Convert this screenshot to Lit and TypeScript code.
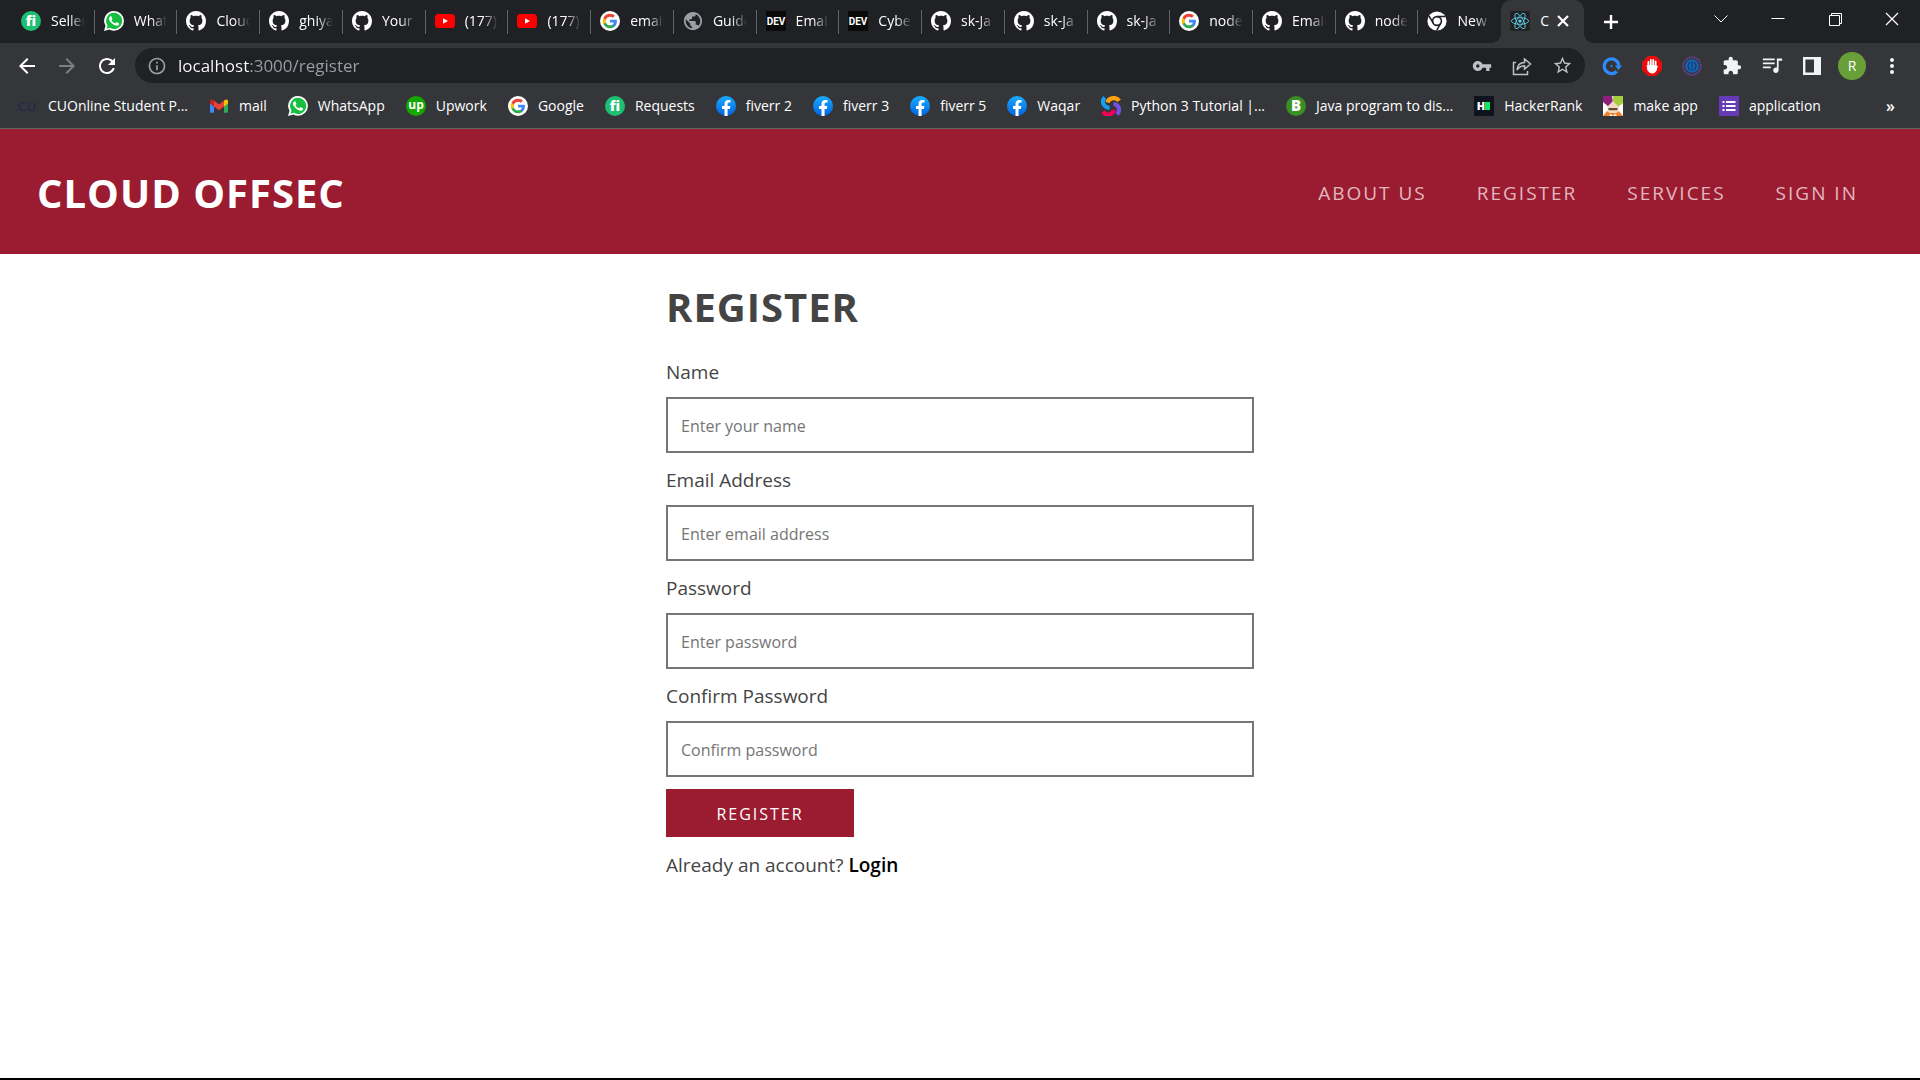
import { LitElement, html, css, svg, nothing } from "lit";
import type { TemplateResult } from "lit";
import { customElement, property } from "lit/decorators.js";

const P = {
  github:
    "M8 0C3.58 0 0 3.58 0 8c0 3.54 2.29 6.53 5.47 7.59.4.07.55-.17.55-.38 0-.19-.01-.82-.01-1.49-2.01.37-2.53-.49-2.69-.94-.09-.23-.48-.94-.82-1.13-.28-.15-.68-.52-.01-.53.63-.01 1.08.58 1.23.82.72 1.21 1.87.87 2.33.66.07-.52.28-.87.51-1.07-1.78-.2-3.64-.89-3.64-3.95 0-.87.31-1.59.82-2.15-.08-.2-.36-1.02.08-2.12 0 0 .67-.21 2.2.82.64-.18 1.32-.27 2-.27s1.36.09 2 .27c1.53-1.04 2.2-.82 2.2-.82.44 1.1.16 1.92.08 2.12.51.56.82 1.27.82 2.15 0 3.07-1.87 3.75-3.65 3.95.29.25.54.73.54 1.48 0 1.07-.01 1.93-.01 2.2 0 .21.15.46.55.38A8.01 8.01 0 0 0 16 8c0-4.42-3.58-8-8-8z",
  phone:
    "M17.472 14.382c-.297-.149-1.758-.867-2.03-.967-.273-.099-.471-.148-.67.15-.197.297-.767.966-.94 1.164-.173.199-.347.223-.644.075-.297-.15-1.255-.463-2.39-1.475-.883-.788-1.48-1.761-1.653-2.059-.173-.297-.018-.458.13-.606.134-.133.298-.347.446-.52.149-.174.198-.298.298-.497.099-.198.05-.371-.025-.52-.075-.149-.669-1.612-.916-2.207-.242-.579-.487-.5-.669-.51-.173-.008-.371-.01-.57-.01-.198 0-.52.074-.792.372-.272.297-1.04 1.016-1.04 2.479 0 1.462 1.065 2.875 1.213 3.074.149.198 2.096 3.2 5.077 4.487.709.306 1.262.489 1.694.625.712.227 1.36.195 1.871.118.571-.085 1.758-.719 2.006-1.413.248-.694.248-1.289.173-1.413-.074-.124-.272-.198-.57-.347",
  back: "M20 11H7.83l5.59-5.59L12 4l-8 8 8 8 1.41-1.41L7.83 13H20v-2z",
  forward: "M12 4l-1.41 1.41L16.17 11H4v2h12.17l-5.58 5.59L12 20l8-8z",
  reload:
    "M17.65 6.35C16.2 4.9 14.21 4 12 4c-4.42 0-7.99 3.58-7.99 8s3.57 8 7.99 8c3.73 0 6.84-2.55 7.73-6h-2.08c-.82 2.33-3.04 4-5.65 4-3.31 0-6-2.69-6-6s2.69-6 6-6c1.66 0 3.14.69 4.22 1.78L13 11h7V4l-2.35 2.35z",
  info: "M11 7h2v2h-2zm0 4h2v6h-2zm1-9C6.48 2 2 6.48 2 12s4.48 10 10 10 10-4.48 10-10S17.52 2 12 2zm0 18c-4.41 0-8-3.59-8-8s3.59-8 8-8 8 3.59 8 8-3.59 8-8 8z",
  star: "M22 9.24l-7.19-.62L12 2 9.19 8.63 2 9.24l5.46 4.73L5.82 21 12 17.27 18.18 21l-1.63-7.03L22 9.24zM12 15.4l-3.76 2.27 1-4.28-3.32-2.88 4.38-.38L12 6.1l1.71 4.04 4.38.38-3.32 2.88 1 4.28L12 15.4z",
  key: "M12.65 10C11.83 7.67 9.61 6 7 6c-3.31 0-6 2.69-6 6s2.69 6 6 6c2.61 0 4.83-1.67 5.65-4H17v4h4v-4h2v-4H12.65zM7 14c-1.1 0-2-.9-2-2s.9-2 2-2 2 .9 2 2-.9 2-2 2z",
  puzzle:
    "M20.5 11H19V7c0-1.1-.9-2-2-2h-4V3.5C13 2.12 11.88 1 10.5 1S8 2.12 8 3.5V5H4c-1.1 0-1.99.9-1.99 2v3.8H3.5c1.49 0 2.7 1.21 2.7 2.7s-1.21 2.7-2.7 2.7H2V20c0 1.1.9 2 2 2h3.8v-1.5c0-1.49 1.21-2.7 2.7-2.7 1.49 0 2.7 1.21 2.7 2.7V22H17c1.1 0 2-.9 2-2v-4h1.5c1.38 0 2.5-1.12 2.5-2.5S21.88 11 20.5 11z",
  queue:
    "M14.500 4H1v2h13.500V4zm0 4.500H1v2h13.500v-2zM1 15h9v-2H1v2zM17 4v10.500c-.31-.11-.65-.18-1-.18-1.900 0-3.200 1.340-3.200 3.100s1.340 3.100 3.100 3.100 3.100-1.340 3.100-3.100V6.500h4V4h-6z",
  globe:
    "M12 2C6.48 2 2 6.48 2 12s4.48 10 10 10 10-4.48 10-10S17.52 2 12 2zm-1 17.93c-3.95-.49-7-3.85-7-7.93 0-.62.08-1.21.21-1.79L9 15v1c0 1.1.9 2 2 2v1.93zm6.9-2.54c-.26-.81-1-1.39-1.9-1.39h-1v-3c0-.55-.45-1-1-1H8v-2h2c.55 0 1-.45 1-1V7h2c1.1 0 2-.9 2-2v-.41c2.93 1.19 5 4.06 5 7.41 0 2.08-.8 3.97-2.1 5.39z",
};

const icon = (size: number, box: string, body: unknown): TemplateResult =>
  html`<svg width=${size} height=${size} viewBox=${box} aria-hidden="true">${body}</svg>`;

const glyph = (d: string, fill: string, size = 24) => icon(size, "0 0 24 24", svg`<path d=${d} fill=${fill} />`);

const ICONS: Record<string, () => TemplateResult> = {
  fiverr: () =>
    icon(20, "0 0 20 20", svg`<circle cx="10" cy="10" r="10" fill="#1dbf73" />
      <text x="10" y="15" text-anchor="middle" font-family="Open Sans, sans-serif" font-weight="800" font-size="14" fill="#fff">fi</text>`),
  whatsapp: () =>
    icon(20, "0 0 24 24", svg`<path d="M12.2 0A11.8 11.8 0 0 1 12.2 23.6a11.8 11.8 0 0 1-5.7-1.5L0 24l1.8-6.3A11.8 11.8 0 0 1 12.2 0z" fill="#fff" />
      <path d="M12.1 2.2a9.7 9.7 0 1 1-5 18l-4 1.1 1.1-3.9a9.7 9.7 0 0 1 7.9-15.2z" fill="#16bf3f" />
      <path d=${P.phone} fill="#fff" />`),
  github: () => icon(20, "0 0 16 16", svg`<path d=${P.github} fill="#fff" />`),
  youtube: () =>
    icon(20, "0 0 20 20", svg`<rect y="3" width="20" height="14" rx="3.6" fill="#f00" /><path d="M8 7.2v5.6l5-2.8z" fill="#fff" />`),
  google: () =>
    icon(20, "0 0 32 32", svg`<circle cx="16" cy="16" r="16" fill="#fff" />
      <g transform="translate(3.4 3.4) scale(1.05)">
        <path d="M22.56 12.25c0-.78-.07-1.53-.2-2.25H12v4.26h5.92c-.26 1.37-1.04 2.53-2.21 3.31v2.77h3.57c2.08-1.92 3.28-4.74 3.28-8.09z" fill="#4285f4" />
        <path d="M12 23c2.97 0 5.46-.98 7.28-2.66l-3.57-2.77c-.98.66-2.23 1.06-3.71 1.06-2.86 0-5.29-1.93-6.16-4.53H2.18v2.84C3.99 20.53 7.7 23 12 23z" fill="#34a853" />
        <path d="M5.84 14.09c-.22-.66-.35-1.36-.35-2.09s.13-1.43.35-2.09V7.07H2.18C1.43 8.55 1 10.22 1 12s.43 3.45 1.18 4.93l2.85-2.22.81-.62z" fill="#fbbc05" />
        <path d="M12 5.38c1.62 0 3.06.56 4.21 1.64l3.15-3.15C17.45 2.09 14.97 1 12 1 7.7 1 3.99 3.47 2.18 7.07l3.66 2.84c.87-2.6 3.3-4.53 6.16-4.53z" fill="#ea4335" />
      </g>`),
  globe: () => icon(20, "1 1 22 22", svg`<path d=${P.globe} fill="#9aa0a6" />`),
  dev: () =>
    icon(20, "0 0 20 20", svg`<rect width="20" height="20" fill="#0a0a0a" />
      <text x="10" y="14" text-anchor="middle" font-family="Roboto, sans-serif" font-weight="700" font-size="10" fill="#fff">DEV</text>`),
  chrome: () =>
    icon(20, "0 0 20 20", svg`<circle cx="10" cy="10" r="9.6" fill="#fff" /><circle cx="10" cy="10" r="4.4" fill="#fff" stroke="#202124" stroke-width="1.6" />
      <path d="M10 5.6h8.6M6.2 12.2L2 5M13.8 12.2L9.6 19.6" stroke="#202124" stroke-width="1.5" fill="none" />`),
  react: () =>
    icon(20, "0 0 20 20", svg`<rect width="20" height="20" rx="2" fill="#222" />
      <g fill="none" stroke="#61dafb" stroke-width=".8">
        <ellipse cx="10" cy="10" rx="8.6" ry="3.3" />
        <ellipse cx="10" cy="10" rx="8.6" ry="3.3" transform="rotate(60 10 10)" />
        <ellipse cx="10" cy="10" rx="8.6" ry="3.3" transform="rotate(120 10 10)" />
      </g><circle cx="10" cy="10" r="1.6" fill="#61dafb" />`),
  cu: () =>
    icon(20, "0 0 20 20", svg`<text x="9" y="15" text-anchor="middle" font-family="DejaVu Sans, sans-serif" font-size="13" fill="#23244f">CU</text>`),
  gmail: () =>
    icon(20, "0 0 20 20", svg`<path d="M1 4.400V15.600c0 .8.5 1.200 1.200 1.200H5V8.200z" fill="#4285f4" />
      <path d="M19 4.400V15.600c0 .8-.5 1.200-1.200 1.200H15V8.200z" fill="#34a853" />
      <path d="M5 4.600v5.800l5 3.800 5-3.800V4.600l-5 3.800z" fill="#ea4335" />
      <path d="M1 5v2.400l4 3V4.600l-.8-.6C2.800 3 1 3.500 1 5z" fill="#c5221f" />
      <path d="M19 5v2.400l-4 3V4.600l.8-.6C17.200 3 19 3.500 19 5z" fill="#fbbc04" />`),
  upwork: () =>
    icon(20, "0 0 20 20", svg`<circle cx="10" cy="10" r="10" fill="#14a800" />
      <text x="10" y="13" text-anchor="middle" font-family="Open Sans, sans-serif" font-weight="700" font-size="12" fill="#fff">up</text>`),
  facebook: () =>
    icon(20, "0 0 24 24", svg`<defs><linearGradient id="fb" x1="0" y1="0" x2="0" y2="1"><stop offset="0" stop-color="#18acfe" /><stop offset="1" stop-color="#0163e0" /></linearGradient></defs>
      <circle cx="12" cy="12" r="12" fill="url(#fb)" />
      <path d="M16.700 15.500l.5-3.500h-3.300V9.800c0-1 .5-1.900 2-1.900h1.500V5s-1.400-.2-2.700-.2c-2.700 0-4.500 1.600-4.500 4.600V12h-3v3.500h3V24a12 12 0 0 0 3.700 0v-8.500z" fill="#fff" />`),
  sololearn: () =>
    icon(20, "0 0 20 20", svg`<g fill="none" stroke-linecap="butt" stroke-width="4.200">
        <path d="M6.500 6.500C8 1.500 15 .500 18.200 4.800" stroke="#ffa20d" />
        <path d="M3.800 1.500C.500 5 1.500 11 8.500 12" stroke="#149ef2" />
        <path d="M2 15.500C4.500 20 11.500 19.500 13 14" stroke="#f20057" />
        <path d="M12.500 8c5.500.600 7.200 6 3.600 10.400" stroke="#7a4ee6" />
      </g>`),
  bgreen: () =>
    icon(20, "0 0 20 20", svg`<circle cx="10" cy="10" r="10" fill="#3a8f22" />
      <text x="10" y="15" text-anchor="middle" font-family="Open Sans, sans-serif" font-weight="800" font-size="15" fill="#fff">B</text>`),
  hackerrank: () =>
    icon(20, "0 0 20 20", svg`<rect width="20" height="20" fill="#0e141e" />
      <text x="7" y="14" text-anchor="middle" font-family="Open Sans, sans-serif" font-weight="800" font-size="11" fill="#fff">H</text>
      <rect x="11" y="6" width="5" height="8" fill="#00ea64" />`),
  makeapp: () =>
    icon(20, "0 0 20 20", svg`<rect width="20" height="20" fill="#fff" />
      <path d="M0 0h9l1 7-4 4-6-5z" fill="#8e1f7f" /><path d="M10 0h10v7l-5 4-5-4z" fill="#a4cf3c" />
      <path d="M10 5l6 6-2 7H6l-2-7z" fill="#f3d9bf" /><rect x="5.500" y="12" width="9" height="2.200" fill="#6b4a35" />
      <path d="M0 20l4-5 4 3-2 2zM20 20l-4-5-4 3 2 2z" fill="#f0832a" /><path d="M7 17h6l-3 3z" fill="#f0832a" />`),
  forms: () =>
    icon(20, "0 0 20 20", svg`<rect width="20" height="20" rx="1" fill="#673ab7" />
      <path d="M7 6h9.500M7 10h9.500M7 14h9.500M3.500 6h2M3.500 10h2M3.500 14h2" stroke="#fff" stroke-width="2.200" />`),
};

interface Entry {
  icon: string;
  text: string;
}
const entries = (rows: string): Entry[] =>
  rows
    .trim()
    .split("\n")
    .map((row) => {
      const [name, text] = row.trim().split("=");
      return { icon: name, text };
    });

const TABS = entries(`
  fiverr=Seller
  whatsapp=What
  github=Cloud
  github=ghiya
  github=Your
  youtube=(177)
  youtube=(177)
  google=email
  globe=Guide
  dev=Email
  dev=Cyber
  github=sk-Ja
  github=sk-Ja
  github=sk-Ja
  google=node
  github=Email
  github=nodej
  chrome=New
`);

const BOOKMARKS = entries(`
  cu=CUOnline Student P...
  gmail=mail
  whatsapp=WhatsApp
  upwork=Upwork
  google=Google
  fiverr=Requests
  facebook=fiverr 2
  facebook=fiverr 3
  facebook=fiverr 5
  facebook=Waqar
  sololearn=Python 3 Tutorial |...
  bgreen=Java program to dis...
  hackerrank=HackerRank
  makeapp=make app
  forms=application
`);

@customElement("browser-bar")
export class BrowserBar extends LitElement {
  static styles = css`
    :host {
      display: block;
      background: #35363a;
      border-bottom: 1px solid #5f6368;
      color: #fff;
      font: 14px/20px "Open Sans", "Noto Sans", sans-serif;
    }
    button,
    input {
      font: inherit;
      color: inherit;
      background: none;
      border: 0;
      padding: 0;
      margin: 0;
    }
    svg {
      display: block;
      flex: none;
    }
    .strip {
      display: flex;
      height: 43px;
      background: #202124;
    }
    .tabs {
      display: flex;
      flex: 1;
      min-width: 0;
      padding-left: 12px;
    }
    .tab {
      display: flex;
      box-sizing: border-box;
      flex: 1 1 0;
      align-items: center;
      min-width: 0;
      gap: 10px;
      padding: 0 10px 1px 9px;
      text-align: left;
      background: linear-gradient(#5f6368, #5f6368) right 0 center / 1px 24px no-repeat;
    }
    .tab.plain {
      background: none;
    }
    .tab.active {
      position: relative;
      gap: 6px;
      background: #35363a;
      border-radius: 10px 10px 0 0;
    }
    .tab.active::before,
    .tab.active::after {
      content: "";
      position: absolute;
      bottom: 0;
      width: 10px;
      height: 10px;
    }
    .tab.active::before {
      right: 100%;
      background: radial-gradient(circle at 0 0, transparent 10px, #35363a 10px);
    }
    .tab.active::after {
      left: 100%;
      background: radial-gradient(circle at 100% 0, transparent 10px, #35363a 10px);
    }
    .title {
      flex: 1;
      min-width: 0;
      overflow: hidden;
      white-space: nowrap;
      mask-image: linear-gradient(90deg, #000 calc(100% - 16px), transparent);
    }
    .active .title {
      padding-left: 4px;
      mask-image: none;
    }
    .close {
      margin-right: 4px;
    }
    .plus,
    .tool {
      display: grid;
      place-items: center;
      flex: none;
      width: 40px;
    }
    .plus {
      margin: 0 61px 0 7px;
    }
    .windows {
      display: flex;
      height: 37px;
    }
    .win {
      display: grid;
      place-items: center;
      width: 57px;
    }
    .toolbar {
      display: flex;
      align-items: center;
      height: 45px;
      padding: 0 8px 0 7px;
    }
    .omnibox {
      display: flex;
      align-items: center;
      flex: 1;
      min-width: 0;
      height: 35px;
      margin: 0 7px 0 8px;
      padding: 0 3px 0 12px;
      border-radius: 18px;
      background: #202124;
    }
    .url {
      flex: 1;
      min-width: 0;
      margin-left: 11px;
      height: 28px;
      font-size: 17px;
      outline: 0;
      color: #e8eaed;
      background: linear-gradient(90deg, #fff 72px, #9aa0a6 72px);
      background-clip: text;
      -webkit-background-clip: text;
      -webkit-text-fill-color: transparent;
    }
    .avatar {
      display: grid;
      place-items: center;
      width: 28px;
      height: 28px;
      border-radius: 50%;
      background: #689f38;
    }
    .bookmarks {
      display: flex;
      align-items: center;
      gap: 21px;
      height: 36px;
      padding: 0 25px 4px 18px;
    }
    .bookmark {
      display: flex;
      align-items: center;
      gap: 10px;
      color: #fff;
      text-decoration: none;
      white-space: nowrap;
    }
    .more {
      margin-left: auto;
      font-size: 16px;
      font-weight: 600;
    }
  `;

  private tool(label: string, body: unknown) {
    return html`<button class="tool" aria-label=${label}>${body}</button>`;
  }

  render() {
    const line = (d: string, width = 1) =>
      icon(20, "0 0 20 20", svg`<path d=${d} fill="none" stroke="#fff" stroke-width=${width} />`);
    return html`
      <div class="strip">
        <div class="tabs">
          ${TABS.map(
            (t, i) => html`<button class="tab ${i === TABS.length - 1 ? "plain" : ""}">
              ${ICONS[t.icon]()}<span class="title">${t.text}</span>
            </button>`
          )}
          <div class="tab active">
            ${ICONS.react()}<span class="title">C</span>
            <button class="close" aria-label="Close tab">
              ${icon(14, "0 0 14 14", svg`<path d="M2 2l10 10M12 2L2 12" stroke="#fff" stroke-width="2.200" />`)}
            </button>
          </div>
        </div>
        <button class="plus" aria-label="New tab">${line("M10 3v14M3 10h14", 2.4)}</button>
        <div class="windows">
          <button class="win" aria-label="Search tabs">${line("M3.500 6.500l6.500 6.500 6.500-6.500")}</button>
          <button class="win" aria-label="Minimize">${line("M3.500 9.500h13")}</button>
          <button class="win" aria-label="Restore">${line("M4.500 6.500h10v10h-10zM6.500 6.500v-2h10v10h-2")}</button>
          <button class="win" aria-label="Close">${line("M4 4l12 12M16 4L4 16", 1.2)}</button>
        </div>
      </div>
      <div class="toolbar">
        ${this.tool("Back", glyph(P.back, "#fff"))} ${this.tool("Forward", glyph(P.forward, "#7d7e82"))}
        ${this.tool("Reload", glyph(P.reload, "#fff"))}
        <div class="omnibox">
          ${glyph(P.info, "#9aa0a6", 20)}
          <input class="url" aria-label="Address" value="localhost:3000/register" />
          ${this.tool("Saved passwords", glyph(P.key, "#bdc1c6", 20))}
          ${this.tool(
            "Share",
            icon(20, "0 0 20 20", svg`<path d="M4 6.500H1.500v12h14V15M5 14c.5-5 3.500-7.500 7.500-7.500V3l6 5-6 5V9.800C9 9.800 7 11 5 14z" fill="none" stroke="#bdc1c6" stroke-width="1.500" />`)
          )}
          ${this.tool("Bookmark", glyph(P.star, "#bdc1c6", 21))}
        </div>
        ${this.tool(
          "Sync extension",
          icon(20, "0 0 20 20", svg`<path d="M14.800 15.300A7.300 7.300 0 1 1 16.800 9.500" fill="none" stroke="#2d8cff" stroke-width="3.200" /><path d="M13 9.500H20L16.500 14z" fill="#2d8cff" /><circle cx="9.500" cy="10" r="1" fill="#2d8cff" />`)
        )}
        ${this.tool(
          "Ad blocker",
          icon(20, "0 0 20 20", svg`<path d="M6 0h8l6 6v8l-6 6H6l-6-6V6z" fill="#e80c0c" />
            <path d="M6.400 10.500V6M8.800 10V4M11.200 10V4M13.600 11V5.500" stroke="#fff" stroke-width="1.800" stroke-linecap="round" />
            <path d="M5.500 9.500h9v3c0 2.500-1.500 4.500-4 4.500-2.800 0-5-2-5-4.500zM13.500 13.500l2.300-3" fill="#fff" stroke="#fff" stroke-linecap="round" />`)
        )}
        ${this.tool(
          "Seal extension",
          icon(20, "0 0 20 20", svg`<circle cx="10" cy="10" r="8.800" fill="none" stroke="#6a3fa0" stroke-width="1.800" stroke-dasharray="1.600 .8" />
            <circle cx="10" cy="10" r="6.800" fill="#1464ae" /><path d="M8 6c-2.500 2-2.500 6 0 8M12 6c2.500 2 2.500 6 0 8M10 5v10" fill="none" stroke="#173a7c" stroke-width="1.200" />`)
        )}
        ${this.tool("Extensions", glyph(P.puzzle, "#f1f3f4", 20))} ${this.tool("Media", glyph(P.queue, "#f1f3f4", 21))}
        ${this.tool(
          "Side panel",
          icon(18, "0 0 18 18", svg`<path d="M1.200 1.200h15.600v15.600H1.200z" fill="none" stroke="#f1f3f4" stroke-width="2.400" /><path d="M11 1h6v16h-6z" fill="#f1f3f4" />`)
        )}
        ${this.tool("Profile", html`<span class="avatar">R</span>`)}
        ${this.tool(
          "Menu",
          icon(18, "0 0 18 18", svg`<g fill="#f1f3f4"><circle cx="9" cy="3" r="2" /><circle cx="9" cy="9" r="2" /><circle cx="9" cy="15" r="2" /></g>`)
        )}
      </div>
      <nav class="bookmarks" aria-label="Bookmarks">
        ${BOOKMARKS.map((b) => html`<a class="bookmark" href="#">${ICONS[b.icon]()}<span>${b.text}</span></a>`)}
        <button class="more" aria-label="More bookmarks">»</button>
      </nav>
    `;
  }
}

@customElement("form-field")
export class FormField extends LitElement {
  @property() label = "";
  @property() hint = "";
  @property() type = "text";

  static styles = css`
    :host {
      display: grid;
      gap: 10px;
    }
    label {
      line-height: 30px;
    }
    input {
      box-sizing: border-box;
      width: 100%;
      height: 56px;
      padding: 2px 13px 0;
      border: 2px solid #767676;
      background: #fff;
      color: #444;
      font: inherit;
      font-size: 16px;
    }
    input::placeholder {
      color: #757575;
      opacity: 1;
    }
  `;

  render() {
    return html`<label for="field">${this.label}</label>
      <input id="field" type=${this.type} placeholder=${this.hint || nothing} />`;
  }
}

@customElement("app-root")
export class AppRoot extends LitElement {
  static styles = css`
    :host {
      display: flex;
      flex-direction: column;
      box-sizing: border-box;
      min-height: 100vh;
      border-bottom: 2px solid #000;
      background: #fff;
      color: #444;
      font: 19px/30px "Open Sans", "Noto Sans", sans-serif;
    }
    .site {
      display: flex;
      align-items: center;
      justify-content: space-between;
      box-sizing: border-box;
      height: 125px;
      padding: 2px 62px 0 37px;
      background: #9b1c31;
    }
    .brand {
      color: #fff;
      font-size: 40px;
      line-height: 60px;
      font-weight: 700;
      letter-spacing: 1px;
      text-decoration: none;
    }
    .menu {
      display: flex;
      gap: 50px;
    }
    .menu a {
      color: #e1b8bf;
      font-weight: 500;
      letter-spacing: 2px;
      text-decoration: none;
    }
    .content {
      box-sizing: border-box;
      width: 100%;
      max-width: 588px;
      margin: 0 auto;
      padding: 23px 0;
    }
    h1 {
      margin: 0 0 20px;
      font-size: 40px;
      line-height: 60px;
      letter-spacing: 1px;
    }
    form {
      display: grid;
      gap: 12px;
    }
    .submit {
      justify-self: start;
      width: 188px;
      height: 48px;
      padding: 2px 0 0;
      border: 0;
      background: #9b1c31;
      color: #fff;
      font: inherit;
      font-size: 16px;
      letter-spacing: 2px;
    }
    .login {
      margin: 0;
      line-height: 32px;
    }
    .login a {
      color: #000;
      font-weight: 600;
      text-decoration: none;
    }
  `;

  render() {
    return html`
      <browser-bar></browser-bar>
      <header class="site">
        <a class="brand" href="#">CLOUD OFFSEC</a>
        <nav class="menu" aria-label="Site">
          ${["ABOUT US", "REGISTER", "SERVICES", "SIGN IN"].map((t) => html`<a href="#">${t}</a>`)}
        </nav>
      </header>
      <main class="content">
        <h1>REGISTER</h1>
        <form>
          <form-field label="Name" hint="Enter your name"></form-field>
          <form-field label="Email Address" hint="Enter email address" type="email"></form-field>
          <form-field label="Password" hint="Enter password" type="password"></form-field>
          <form-field label="Confirm Password" hint="Confirm password" type="password"></form-field>
          <button class="submit" type="button">REGISTER</button>
          <p class="login">Already an account? <a href="#">Login</a></p>
        </form>
      </main>
    `;
  }
}
